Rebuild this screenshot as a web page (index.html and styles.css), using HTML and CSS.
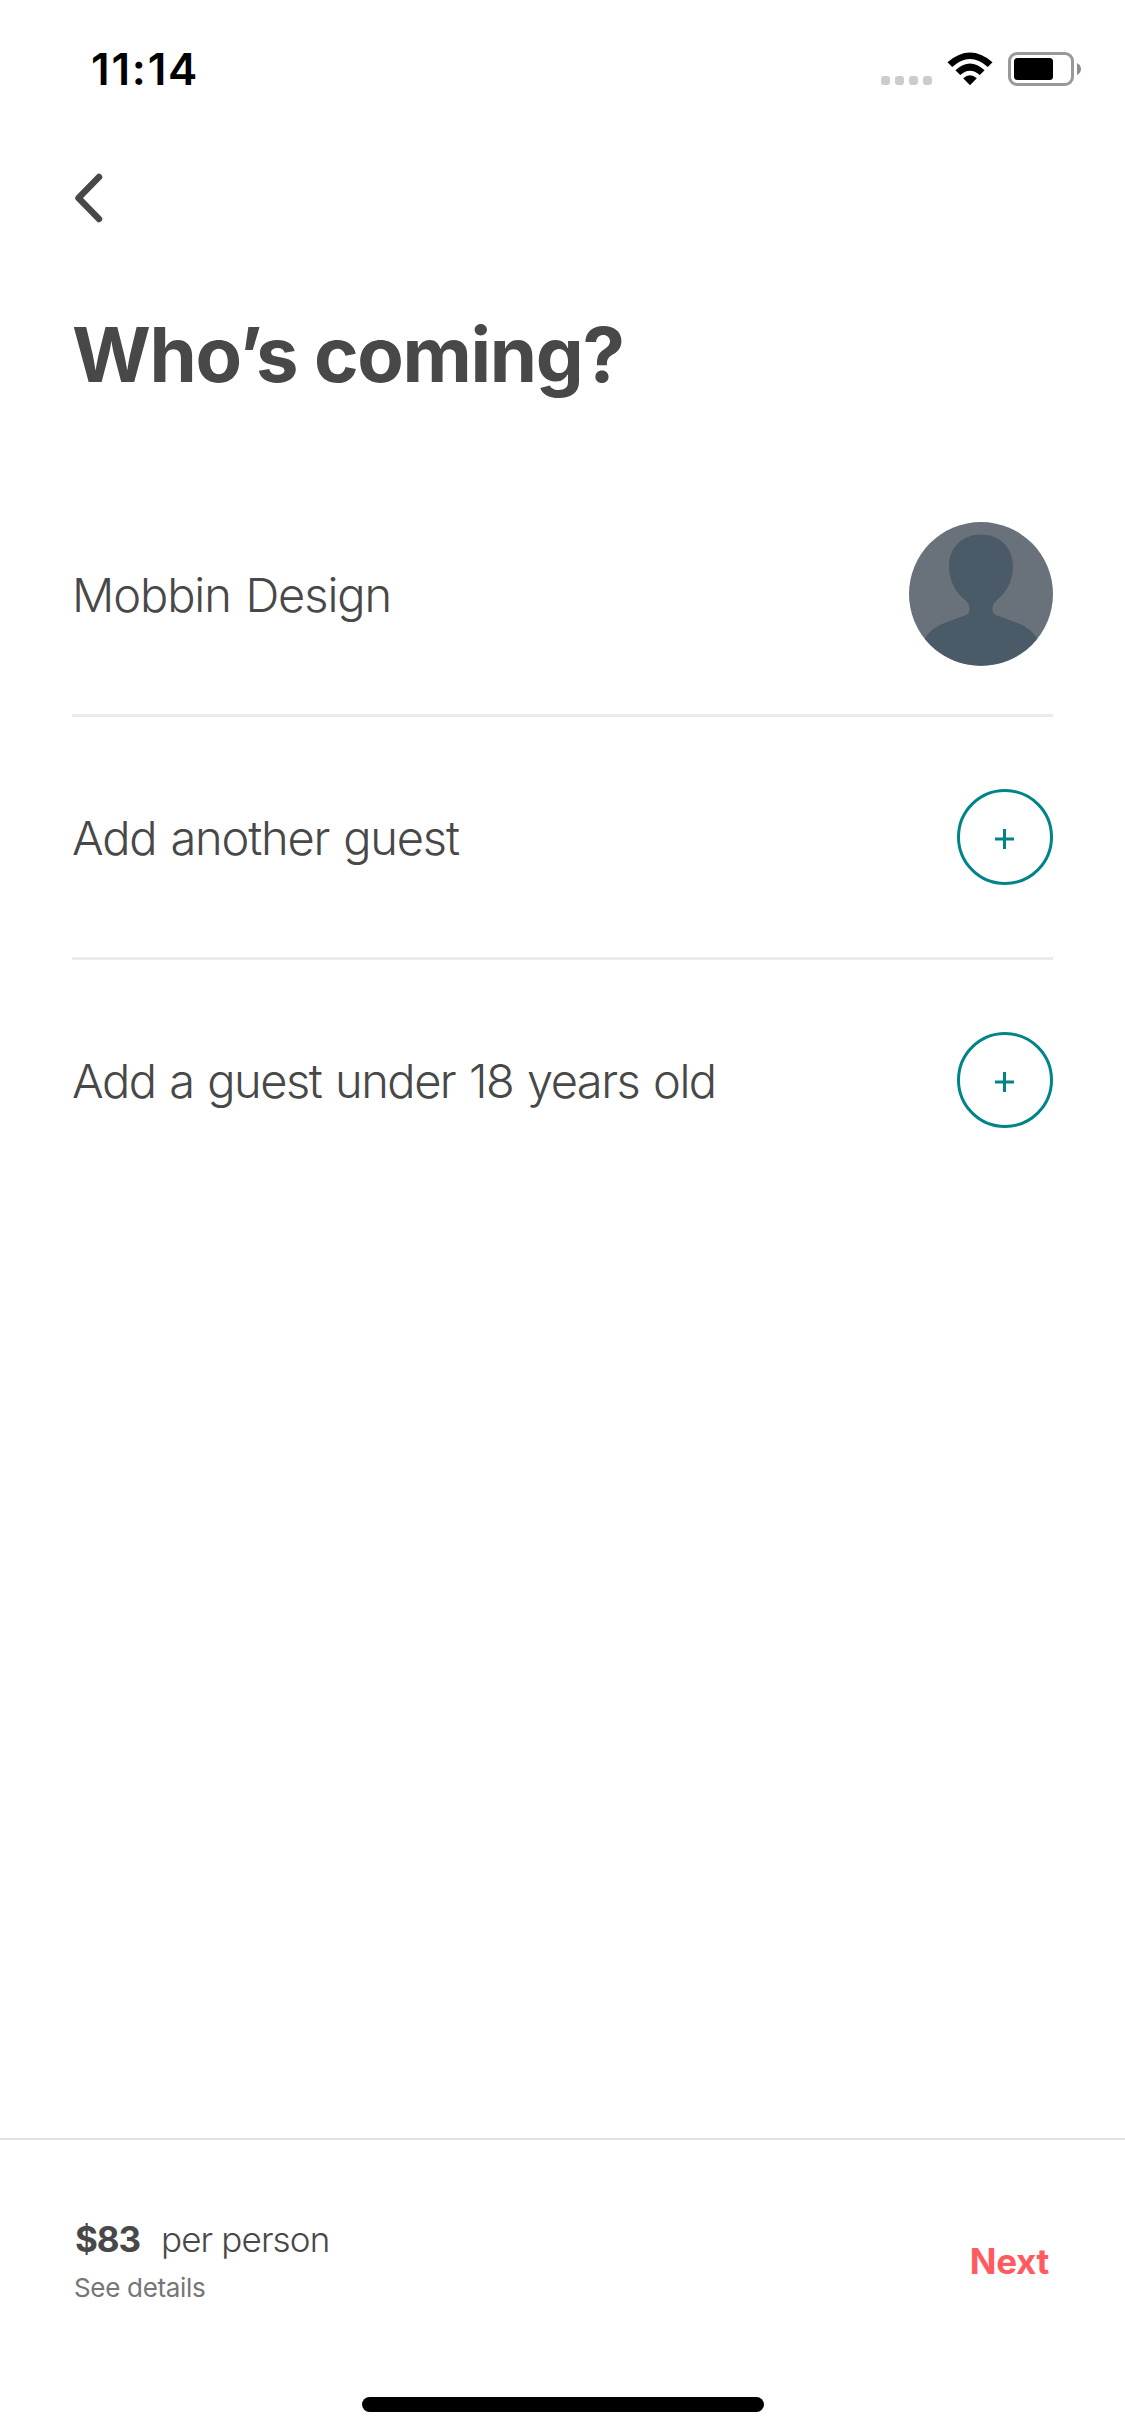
FILE: index.html
```html
<!DOCTYPE html>
<html lang="en">
<head>
<meta charset="utf-8">
<title>Who’s coming?</title>
<link rel="stylesheet" href="styles.css">
</head>
<body>
<div class="screen">
  <header class="status">
    <span class="clock">11:14</span>
    <div class="indicators">
      <div class="signal"><i></i><i></i><i></i><i></i></div>
      <svg class="wifi" width="46" height="34" viewBox="0 0 46 34">
        <path d="M0.5 10.2Q23 -9.2 45.5 10.2L40.8 15Q23 -0.8 5.2 15Z"/>
        <path d="M8.4 18.2Q23 4.6 37.6 18.2L32.8 23Q23 14.4 13.2 23Z"/>
        <path d="M16.2 26.3Q23 20.2 29.8 26.3L23 33.2Z"/>
      </svg>
      <svg class="battery" width="74" height="34" viewBox="0 0 74 34">
        <rect x="1.5" y="1.5" width="63" height="31" rx="7.5" fill="none" stroke="#999" stroke-width="3"/>
        <rect x="6" y="6" width="39" height="22" rx="3.5" fill="#000"/>
        <path d="M69 11Q73 13.2 73 17T69 23Z" fill="#8c8c8c"/>
      </svg>
    </div>
  </header>
  <nav class="nav">
    <svg width="30" height="54" viewBox="0 0 30 54"><path d="M25 6L4.500 27L25 48"/></svg>
  </nav>
  <h1 class="title">Who’s coming?</h1>
  <main class="guests">
    <div class="row">
      <span class="label name">Mobbin Design</span>
      <svg class="avatar" width="144" height="144" viewBox="0 0 144 144">
        <circle cx="72" cy="72" r="72" fill="#69717b"/>
        <path fill="#4a5a66" d="M72 12.500C91 12.500 104 26 104 44C104 58 98 70 88 78C82 83 82 91 87 93L111 102Q121 106 128.300 116.500A72 72 0 0 1 15.700 116.500Q23 106 33 102L57 93C62 91 62 83 56 78C46 70 40 58 40 44C40 26 53 12.500 72 12.500Z"/>
      </svg>
    </div>
    <div class="row">
      <span class="label another">Add another guest</span>
      <button class="add" aria-label="Add another guest"><svg width="19" height="20" viewBox="0 0 19 20"><path d="M0 10H19M9.500 0V20"/></svg></button>
    </div>
    <div class="row">
      <span class="label minor">Add a guest under 18 years old</span>
      <button class="add" aria-label="Add a guest under 18"><svg width="19" height="20" viewBox="0 0 19 20"><path d="M0 10H19M9.500 0V20"/></svg></button>
    </div>
  </main>
  <footer class="footer">
    <div class="summary">
      <div class="price"><strong>$83</strong><span>per person</span></div>
      <div class="details">See details</div>
    </div>
    <div class="next">Next</div>
  </footer>
  <div class="home"></div>
</div>
</body>
</html>
```
FILE: styles.css
```css
* { box-sizing: border-box; }
body { margin: 0; background: #fff; font-family: Inter, "Liberation Sans", sans-serif; color: #484848; }
.screen { width: 1125px; height: 2436px; display: flex; flex-direction: column; background: #fff; }

.status { height: 138px; display: flex; justify-content: space-between; align-items: flex-start; padding: 52px 43px 0 91px; }
.clock { font-size: 44px; font-weight: 600; line-height: 34px; letter-spacing: 1.8px; color: #000; }
.indicators { display: flex; align-items: flex-start; }
.signal { display: flex; gap: 5px; padding-top: 24px; margin-right: 15px; }
.signal i { width: 9px; height: 9px; border-radius: 3px; background: #ccc; }
.wifi { margin-right: 15px; fill: #000; }

.nav { height: 170px; padding: 33px 0 0 74px; }
.nav svg { display: block; fill: none; stroke: #484848; stroke-width: 6.5; stroke-linecap: round; stroke-linejoin: round; }

.title { margin: 0 72px; height: 166px; font-size: 76px; font-weight: 700; line-height: 93px; letter-spacing: -1.35px; }

.guests { flex: 1; padding: 0 72px; }
.row { height: 243px; display: flex; align-items: center; justify-content: space-between; border-bottom: 3px solid #ebebeb; }
.row:last-child { border-bottom-color: transparent; }
.label { padding-top: 2px; font-size: 47px; font-weight: 300; line-height: 58px; white-space: nowrap; }
.name { letter-spacing: -1.1px; word-spacing: 2.5px; }
.another { letter-spacing: -1.2px; word-spacing: 2px; }
.minor { letter-spacing: -1.5px; word-spacing: 2px; }
.avatar { display: block; }
.add { width: 96px; height: 96px; display: flex; align-items: center; justify-content: center; padding: 4px 1px 0 0; border: 3px solid #008489; border-radius: 50%; background: none; }
.add svg { display: block; fill: none; stroke: #008489; stroke-width: 3; }

.footer { height: 259px; display: flex; justify-content: space-between; align-items: flex-start; padding: 77px 76px 0 75px; border-top: 2px solid #e1e1e1; }
.price { display: flex; align-items: baseline; gap: 21px; font-size: 35px; line-height: 44px; font-weight: 300; letter-spacing: -0.87px; }
.price strong { font-weight: 700; letter-spacing: -1.1px; }
.details { margin: 10px 0 0 -1px; font-size: 26px; line-height: 34px; letter-spacing: -0.32px; color: #767676; }
.next { padding-top: 22px; font-size: 35px; line-height: 44px; font-weight: 700; letter-spacing: -0.3px; color: #ff5a5f; }

.home { width: 402px; height: 15px; margin: 0 auto 24px; border-radius: 7.5px; background: #000; }
```
